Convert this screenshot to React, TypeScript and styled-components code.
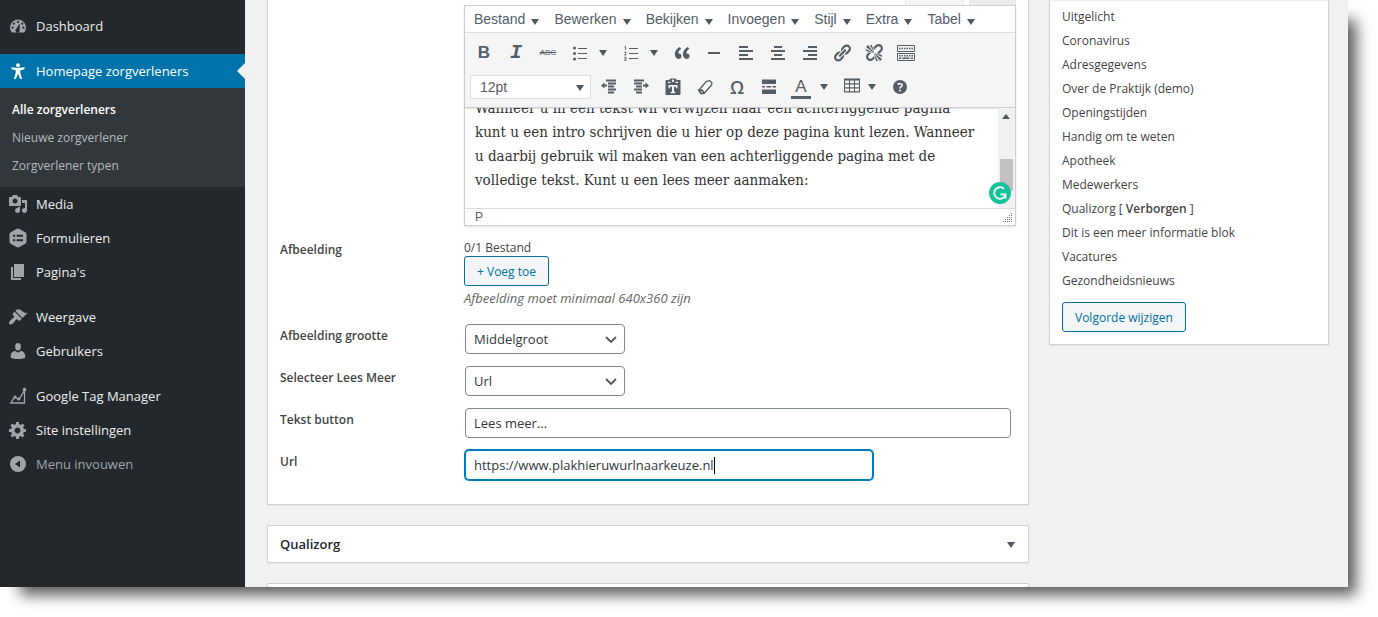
import React from "react";
import styled, { createGlobalStyle, css } from "styled-components";

const sans = `"Open Sans", "Noto Sans", sans-serif`;
const toolFont = `"Liberation Sans", Arial, sans-serif`;

const GlobalStyle = createGlobalStyle`
  *, *::before, *::after { box-sizing: border-box; }
  body {
    margin: 0;
    background: #fff;
    color: #444;
    font: 12px/18px ${sans};
  }
  button, input, select { font-family: inherit; margin: 0; }
  ul, p, h2 { margin: 0; padding: 0; list-style: none; }
  svg { display: block; flex: none; }
`;

const Shell = styled.div`
  display: flex;
  height: calc(100vh - 30px);
  margin: 0 30px 30px 0;
  background: #f1f1f1;
  box-shadow: 14px 14px 14px -6px rgba(0, 0, 0, 0.65);
`;

/* ---------- Sidebar ---------- */

const Sidebar = styled.nav`
  flex: 0 0 245px;
  padding-top: 9px;
  background: #23282d;
  overflow: hidden;
`;

const MenuLink = styled.a<{ $current?: boolean; $muted?: boolean }>`
  position: relative;
  display: flex;
  align-items: center;
  gap: 8px;
  height: 34px;
  padding-left: 8px;
  font-size: 13px;
  color: ${(p) => (p.$muted ? "#a0a5aa" : "#eee")};
  text-decoration: none;
  svg { color: #a0a5aa; }
  ${(p) =>
    p.$current &&
    css`
      background: #0073aa;
      color: #fff;
      svg { color: #fff; }
      &::after {
        content: "";
        position: absolute;
        right: 0;
        top: 9px;
        border: 8px solid transparent;
        border-right-color: #f1f1f1;
        border-left-width: 0;
      }
    `}
`;

const MenuGroup = styled.ul`
  & + & { margin-top: 11px; }
`;

const SubMenu = styled.ul`
  padding: 8px 0 7px;
  background: #32373c;
`;

const SubLink = styled.a<{ $current?: boolean }>`
  display: block;
  padding-left: 12px;
  font-size: 12px;
  line-height: 28px;
  color: ${(p) => (p.$current ? "#fff" : "#b4b9be")};
  font-weight: ${(p) => (p.$current ? 600 : 400)};
  text-decoration: none;
`;

/* ---------- Content ---------- */

const Content = styled.main`
  display: flex;
  flex: 1;
  align-items: flex-start;
  gap: 20px;
  min-width: 0;
  padding: 0 19px 0 22px;
  overflow: hidden;
`;

const Column = styled.div`
  display: flex;
  flex: 1;
  flex-direction: column;
  gap: 20px;
  min-width: 0;
`;

const Box = styled.section<{ $open?: boolean }>`
  background: #fff;
  border: 1px solid #ccd0d4;
  border-top-width: ${(p) => (p.$open ? 0 : 1)}px;
  box-shadow: 0 1px 1px rgba(0, 0, 0, 0.04);
`;

const FormBox = styled(Box)`
  padding: 0 12px 18px;
`;

const BoxHead = styled.div`
  display: flex;
  align-items: center;
  justify-content: space-between;
  height: 36px;
  padding: 0 13px 0 12px;
`;

const BoxTitle = styled.h2`
  font-size: 13px;
  font-weight: 600;
  color: #23282d;
`;

const ToggleButton = styled.button`
  padding: 2px 0 0;
  border: 0;
  background: none;
  color: #72777c;
`;

const Field = styled.div`
  display: grid;
  grid-template-columns: 184px minmax(0, 1fr);
  padding: 6px 0;
`;

const EditorField = styled(Field)`
  padding-top: 0;
`;

const labelText = css`
  font-size: 12px;
  font-weight: 600;
  line-height: 24px;
`;
const Label = styled.label`${labelText}`;
const LabelText = styled.span`${labelText}`;

const FileCount = styled.p`
  padding-top: 1px;
  line-height: 17px;
`;

const Note = styled.p`
  margin: 3px 0 5px;
  font-size: 13px;
  font-style: italic;
  color: #666;
`;

const OutlineButton = styled.button`
  height: 30px;
  padding: 0 12px;
  border: 1px solid #0071a1;
  border-radius: 3px;
  background: #f3f5f6;
  color: #0071a1;
  font-size: 12px;
`;

const SelectWrap = styled.div`
  position: relative;
  width: 160px;
  margin-left: 1px;
  svg {
    position: absolute;
    right: 7px;
    top: 9px;
    color: #555;
    pointer-events: none;
  }
`;

const control = css`
  height: 30px;
  padding: 0 8px;
  border: 1px solid #7e8993;
  border-radius: 4px;
  background: #fff;
  color: #32373c;
  font-size: 13px;
`;

const Select = styled.select`
  ${control}
  width: 100%;
  appearance: none;
`;

const InputWrap = styled.div<{ $short?: boolean }>`
  position: relative;
  margin: 0 5px 0 1px;
  width: ${(p) => (p.$short ? "calc(75% - 6px)" : "auto")};
`;

const Input = styled.input<{ $focused?: boolean }>`
  ${control}
  display: block;
  width: 100%;
  outline: none;
  ${(p) =>
    p.$focused &&
    css`
      border-color: #007cba;
      box-shadow: 0 0 0 1px #007cba;
    `}
`;

const TextCursor = styled.span`
  position: absolute;
  left: 249px;
  top: 7px;
  width: 1px;
  height: 17px;
  background: #000;
`;

/* ---------- Editor ---------- */

const TabStrip = styled.div`
  display: flex;
  justify-content: flex-end;
  gap: 5px;
  height: 5px;
`;

const TabEnd = styled.div<{ $active?: boolean }>`
  width: ${(p) => (p.$active ? 59 : 47)}px;
  border: solid #e5e5e5;
  border-width: 0 1px;
  background: ${(p) => (p.$active ? "#f5f5f5" : "#ebebeb")};
`;

const Editor = styled.div`
  border: 1px solid #ccd0d4;
  box-shadow: 0 1px 2px rgba(0, 0, 0, 0.12);
  font-family: ${toolFont};
  color: #555d66;
`;

const MenuBar = styled.div`
  display: flex;
  gap: 15px;
  height: 27px;
  padding-left: 9px;
  border-bottom: 1px solid #ddd;
`;

const MenuButton = styled.button`
  display: flex;
  align-items: center;
  gap: 6px;
  padding: 0;
  border: 0;
  background: none;
  color: #555d66;
  font-size: 14px;
  svg { margin-top: 5px; }
`;

const Toolbar = styled.div`
  position: relative;
  padding: 3px 5px;
  border-bottom: 1px solid #ccd0d4;
  background: #f5f5f5;
  box-shadow: 0 1px 1px rgba(0, 0, 0, 0.1);
`;

const ToolRow = styled.div`
  display: flex;
  align-items: center;
  gap: 4px;
  height: 34px;
`;

const Tool = styled.button<{ $split?: "wide" | "narrow" }>`
  display: flex;
  align-items: center;
  width: ${(p) => (p.$split === "wide" ? 47 : p.$split === "narrow" ? 44 : 28)}px;
  height: 28px;
  padding: 0 4px;
  border: 0;
  background: none;
  color: #555d66;
  gap: ${(p) => (p.$split === "narrow" ? 6 : 9)}px;
`;

const Glyph = styled.span<{ $kind: "bold" | "italic" | "strike" | "omega" | "color" }>`
  width: 20px;
  text-align: center;
  ${(p) =>
    ({
      bold: "font: 700 17px/20px " + toolFont + ";",
      italic: "font: italic 700 20px/20px 'Liberation Mono', monospace;",
      strike: "font-size: 8px; line-height: 20px; text-decoration: line-through;",
      omega: "font: 700 18px/20px 'Open Sans', sans-serif; font-weight: 600;",
      color: "font-size: 17px; line-height: 18px; border-bottom: 3px solid #555d66; margin-top: 3px;",
    })[p.$kind]}
`;

const SizeWrap = styled.div`
  position: relative;
  width: 121px;
  svg {
    position: absolute;
    right: 7px;
    top: 10px;
    pointer-events: none;
  }
`;

const SizeSelect = styled.select`
  display: block;
  width: 100%;
  height: 24px;
  padding: 0 9px;
  border: 1px solid #ddd;
  border-radius: 0;
  background: #fff;
  color: #555d66;
  font: 14px ${toolFont};
  appearance: none;
`;

const EditArea = styled.div`
  position: relative;
  display: flex;
  height: 100px;
`;

const Prose = styled.div`
  display: flex;
  flex: 1;
  flex-direction: column;
  justify-content: flex-end;
  min-width: 0;
  padding: 0 10px 16px;
  overflow: hidden;
  color: #333;
  font: 15px/24px "DejaVu Serif Condensed", "Liberation Serif", serif;
  white-space: nowrap;
`;

const ScrollTrack = styled.div`
  display: flex;
  flex-direction: column;
  align-items: center;
  justify-content: space-between;
  width: 17px;
  padding: 6px 1px 17px 0;
  background: #f1f1f1;
`;

const ScrollThumb = styled.div`
  width: 13px;
  height: 32px;
  background: #c1c1c1;
`;

const Badge = styled.div`
  position: absolute;
  right: 4px;
  bottom: 4px;
`;

const StatusBar = styled.div`
  display: flex;
  align-items: center;
  justify-content: space-between;
  height: 17px;
  padding: 0 2px 0 10px;
  border-top: 1px solid #ddd;
  font-size: 12px;
  line-height: 16px;
`;

/* ---------- Right column ---------- */

const OrderBox = styled(Box)`
  flex: 0 0 280px;
  padding: 4px 12px 12px;
  border-top-color: #eee;
`;

const OrderList = styled.ul`
  padding-bottom: 9px;
  line-height: 24px;
`;

const Hidden = styled.b`
  font-weight: 600;
`;

/* ---------- Icons ---------- */

type IconProps = { children: React.ReactNode };
const Icon = ({ children }: IconProps) => (
  <svg width="20" height="20" viewBox="0 0 20 20" fill="currentColor" aria-hidden="true">
    {children}
  </svg>
);

const Caret = ({ up }: { up?: boolean }) => (
  <svg width="8" height="6" viewBox="0 0 8 6" fill="#50575e" aria-hidden="true">
    <path d={up ? "M4 0L8 5H0z" : "M0 0h8L4 6z"} />
  </svg>
);

const Chevron = () => (
  <svg width="14" height="14" viewBox="0 0 14 14" fill="none" stroke="currentColor" strokeWidth="1.8" aria-hidden="true">
    <path d="M2 4l5 5 5-5" />
  </svg>
);

const icons = {
  dashboard: (
    <path
      fillRule="evenodd"
      d="M3.76 16.5A8 8 0 1 1 16.24 16.5zM10 4.8a1.1 1.1 0 1 0 0 2.2 1.1 1.1 0 0 0 0-2.2zM5.9 6.6a1.1 1.1 0 1 0 0 2.2 1.1 1.1 0 0 0 0-2.2zM14.3 6.6a1.1 1.1 0 1 0 0 2.2 1.1 1.1 0 0 0 0-2.2zM4.6 10.6a1.1 1.1 0 1 0 0 2.2 1.1 1.1 0 0 0 0-2.2zM15.4 10.6a1.1 1.1 0 1 0 0 2.2 1.1 1.1 0 0 0 0-2.2zM11.9 7.2L8.3 12.7a2.1 2.1 0 1 0 3.3 1z"
    />
  ),
  person: (
    <>
      <circle cx="10" cy="4.2" r="1.9" />
      <path d="M3.5 6.2L8.6 6.7h2.8l5.1-.5v2l-4.200 1v2.600l1.900 6.200h-2.200l-1.700-4.800h-.6L8 18H5.800l1.900-6.200V9.200l-4.200-1z" />
    </>
  ),
  media: (
    <path d="M13 11V4c0-.55-.45-1-1-1h-1.67L9 1H5L3.67 3H2c-.55 0-1 .45-1 1v7c0 .55.45 1 1 1h10c.55 0 1-.45 1-1zM7 4.5c1.38 0 2.5 1.12 2.5 2.5S8.38 9.5 7 9.5 4.5 8.38 4.5 7 5.62 4.5 7 4.5zM14 6h5v10.5c0 1.38-1.12 2.5-2.5 2.5S14 17.88 14 16.5s1.12-2.5 2.5-2.5c.17 0 .34.02.5.05V9h-3V6zm-4 8.05V13h2v3.5c0 1.38-1.12 2.5-2.5 2.5S7 17.88 7 16.5 8.12 14 9.5 14c.17 0 .34.02.5.05z" />
  ),
  forms: (
    <path
      fillRule="evenodd"
      d="M10 .5l1.5.5 6.2 3.6.8 1.4v8l-.8 1.4-6.2 3.6-1.5.5-1.5-.5-6.2-3.6-.8-1.400V6l.8-1.400L8.500 1zM5 6.700v2h2.200v-2zM8.600 6.700v2H15v-2zM5 11.300v2h2.200v-2zM8.600 11.300v2H15v-2z"
    />
  ),
  pages: <path d="M6 15V2h10v13H6zm-1 1h8v2H3V5h2v11z" />,
  brush: (
    <path d="M14.48 11.06L7.41 3.99l1.5-1.5c.5-.56 2.3-.47 3.51.32 1.21.8 1.43 1.28 2.91 2.1 1.18.64 2.45 1.26 4.45.85zm-.71.71L6.7 4.7 4.93 6.47c-.39.39-.39 1.02 0 1.41l1.06 1.06c.39.39.39 1.03 0 1.42-.6.6-1.43 1.11-2.21 1.69-.35.26-.7.53-1.01.84C1.43 14.23.4 16.08 1.4 17.07c.99 1 2.84-.03 4.18-1.36.31-.31.58-.66.85-1.02.57-.78 1.08-1.61 1.69-2.21.39-.39 1.02-.39 1.41 0l1.06 1.06c.39.39 1.02.39 1.41 0z" />
  ),
  user: (
    <>
      <ellipse cx="10" cy="5.800" rx="2.900" ry="3.800" />
      <path d="M7.300 10L10 11.800 12.700 10c2.400 0 4.500 2.300 4.500 4.500V17s-3.600 1.100-7.200 1.100S2.800 17 2.800 17v-2.500c0-2.300 1.900-4.500 4.500-4.500z" />
    </>
  ),
  analytics: (
    <g fill="none" stroke="currentColor" strokeWidth="1.3">
      <path d="M2.800 17L6.800 11l4 2.500L16.500 4.500V17z" />
      <circle cx="16.500" cy="3.500" r="1.200" fill="currentColor" />
      <circle cx="7" cy="11" r=".9" fill="currentColor" />
      <circle cx="10.800" cy="13" r=".9" fill="currentColor" />
    </g>
  ),
  gear: (
    <path d="M18 12h-2.18c-.17.7-.44 1.35-.81 1.93l1.54 1.54-2.1 2.1-1.54-1.54c-.58.36-1.23.63-1.91.79V19H8v-2.18c-.68-.16-1.33-.43-1.91-.79l-1.54 1.54-2.12-2.12 1.54-1.54c-.36-.58-.63-1.23-.79-1.91H1V9.03h2.17c.16-.7.44-1.35.8-1.94L2.43 5.55l2.1-2.1 1.54 1.54c.58-.37 1.24-.64 1.93-.81V2h3v2.18c.68.16 1.33.43 1.91.79l1.54-1.54 2.12 2.12-1.54 1.54c.36.59.64 1.24.8 1.94H18V12zm-8.5 1.5c1.66 0 3-1.34 3-3s-1.34-3-3-3-3 1.34-3 3 1.34 3 3 3z" />
  ),
  collapse: <path fillRule="evenodd" d="M10 2a8 8 0 1 0 0 16 8 8 0 0 0 0-16zM12 6.500v7L7 10z" />,
  bullets: (
    <>
      <circle cx="4.500" cy="5" r="1.500" />
      <circle cx="4.500" cy="10.500" r="1.500" />
      <circle cx="4.500" cy="16" r="1.500" />
      <path d="M8 5h9v1H8zM8 10h9v1H8zM8 15h9v1H8z" />
    </>
  ),
  numbers: (
    <>
      <path d="M8 5h9v1H8zM8 10h9v1H8zM8 15h9v1H8z" />
      <path fill="none" stroke="currentColor" strokeWidth=".9" d="M3.500 4l1-.6v3.400M3.300 9h1.600v1.300L3.500 12h1.800M3.300 14.200h1.600v3.300H3.300M3.600 15.800h1.300" />
    </>
  ),
  quote: (
    <path d="M9.49 13.22c0-.74-.2-1.38-.61-1.9-.62-.78-1.83-.88-2.53-.72-.29-1.65 1.11-3.75 2.92-4.65L7.88 4c-2.73 1.3-5.42 4.28-4.96 8.05C3.21 14.43 4.59 16 6.54 16c.85 0 1.56-.25 2.12-.75s.83-1.18.83-2.03zm8.05 0c0-.74-.2-1.38-.61-1.9-.63-.78-1.83-.88-2.53-.72-.29-1.65 1.11-3.75 2.92-4.65L15.93 4c-2.73 1.3-5.41 4.28-4.95 8.05.29 2.38 1.66 3.95 3.61 3.95.85 0 1.56-.25 2.12-.75s.83-1.18.83-2.03z" />
  ),
  rule: <path d="M4 9h12v2H4z" />,
  left: <path d="M3 3h9v2H3zM3 7h14v2H3zM3 11h9v2H3zM3 15h14v2H3z" />,
  center: <path d="M6 3h8v2H6zM3 7h14v2H3zM6 11h8v2H6zM3 15h14v2H3z" />,
  right: <path d="M8 3h9v2H8zM3 7h14v2H3zM8 11h9v2H8zM3 15h14v2H3z" />,
  link: (
    <path d="M17.74 2.76c1.68 1.69 1.68 4.41 0 6.1l-1.53 1.52c-1.12 1.12-2.7 1.47-4.14 1.09l2.62-2.61.76-.77.76-.76c.84-.84.84-2.2 0-3.04-.84-.85-2.2-.85-3.04 0l-.77.76-3.38 3.38c-.37-1.44-.02-3.02 1.1-4.14l1.52-1.53c1.69-1.68 4.42-1.68 6.1 0zM8.59 13.43l5.34-5.34c.42-.42.42-1.1 0-1.52-.44-.43-1.13-.39-1.53 0l-5.33 5.34c-.42.42-.42 1.1 0 1.52.44.43 1.13.39 1.52 0zm-.76 2.29l4.14-4.15c.38 1.44.03 3.02-1.09 4.14l-1.52 1.53c-1.69 1.68-4.41 1.68-6.1 0-1.68-1.68-1.68-4.42 0-6.1l1.53-1.52c1.12-1.12 2.7-1.47 4.14-1.1l-4.14 4.15c-.85.84-.85 2.2 0 3.05.84.84 2.2.84 3.04 0z" />
  ),
  unlink: (
    <path d="M17.74 2.26c1.68 1.69 1.68 4.41 0 6.1l-1.53 1.52c-.32.33-.69.58-1.08.77L13 10l1.69-1.64.76-.77.76-.76c.84-.84.84-2.2 0-3.04-.84-.85-2.2-.85-3.04 0l-.77.76-.76.76L10 7l-.65-2.14c.19-.38.44-.75.77-1.07l1.52-1.53c1.69-1.68 4.42-1.68 6.1 0zM2 4l8 6-6-8zm4-2l4 8-2-8H6zM2 6l8 4-8-2V6zm7.36 7.69L10 13l.74 2.35-1.38 1.39c-1.69 1.68-4.41 1.68-6.1 0-1.68-1.68-1.68-4.42 0-6.1l1.39-1.38L7 10l-.69.64-1.52 1.53c-.85.84-.85 2.2 0 3.04.84.85 2.2.85 3.04 0zM18 16l-8-6 6 8zm-4 2l-4-8 2 8h2zm4-4l-8-4 8 2v2z" />
  ),
  keyboard: (
    <g fill="none" stroke="currentColor">
      <path d="M1.500 2.500h17v6h-17zM1.500 10.500h17v7h-17z" />
      <path strokeWidth="1.500" strokeDasharray="1.500 1" d="M3 5.500h14M3 12.800h14" />
      <path strokeWidth="1.500" d="M3 15.300h2.200M6.500 15.300h7M14.800 15.300H17" />
    </g>
  ),
  outdent: <path d="M7 2.500h10v2H7zM9 5.500h8v2H9zM9 8.500h6v2H9zM9 11.500h8v2H9zM9 14.500h6v2H9zM8 9.500H5.500v2L2 8.500l3.500-3v2H8z" />,
  indent: <path d="M3 2.500h10v2H3zM3 5.500h8v2H3zM5 8.500h6v2H5zM3 11.500h8v2H3zM5 14.500h6v2H5zM12 7.500h2.500v-2l3.500 3-3.500 3v-2H12z" />,
  paste: (
    <path
      fillRule="evenodd"
      d="M7.500 1.500h5L14 3h2.500c.6 0 1 .4 1 1v13c0 .6-.4 1-1 1h-13c-.6 0-1-.4-1-1V4c0-.6.4-1 1-1H6zM10 2.600a1.200 1.200 0 1 0 0 2.400 1.200 1.200 0 0 0 0-2.400zM5 4.800V6h10V4.800h-2.500V6h-5V4.800zM5.500 8v3.300h1.500V9.800h2v5H7.700v1.400h4.600v-1.400H11v-5h2v1.500h1.500V8z"
    />
  ),
  eraser: (
    <g fill="none" stroke="currentColor" strokeWidth="1.300" strokeLinejoin="round">
      <path d="M3.800 13.200L11.500 4.300l3.200-.6 2.200 2-.3 2.300L9.200 16.300l-3 .2z" />
      <path strokeWidth="1.600" d="M3.800 13.200l3.200-.2 2.200 3.300-3 .2z" />
    </g>
  ),
  more: <path d="M3 2.500h14V7H3zM3 9h3v1.500H3zM7.500 9H12v1.500H7.500zM13.500 9H17v1.500h-3.500zM3 12.500h14V17H3z" />,
  table: <path fillRule="evenodd" d="M2 1.500h16v14H2zM3 3.500v2.700h4V3.500zM8 3.500v2.700h4V3.500zM13 3.500v2.700h4V3.500zM3 7.500v2.700h4V7.500zM8 7.500v2.700h4V7.500zM13 7.500v2.700h4V7.500zM3 11.500v2.700h4v-2.700zM8 11.500v2.700h4v-2.700zM13 11.500v2.700h4v-2.700z" />,
  help: (
    <>
      <circle cx="10" cy="10" r="7" />
      <path fill="none" stroke="#f5f5f5" strokeWidth="1.700" d="M7.700 7.500C9 6.400 12.200 6.300 12.200 8.200c0 1.500-2.200 1.400-2.200 3.300" />
      <circle cx="10" cy="13.400" r="1" fill="#f5f5f5" />
    </>
  ),
};

const Grammarly = () => (
  <svg width="22" height="22" viewBox="0 0 22 22" role="img" aria-label="Grammarly">
    <circle cx="11" cy="11" r="11" fill="#15c39a" />
    <path d="M15 6.800A5.800 5.800 0 1 0 16.600 12.500M11.500 12.400h5v4" fill="none" stroke="#fff" strokeWidth="1.800" />
  </svg>
);

const ResizeGrip = () => (
  <svg width="10" height="10" viewBox="0 0 10 10" stroke="#72777c" strokeDasharray="1 1" aria-hidden="true">
    <path d="M8 1.500h2M6 3.500h4M4 5.500h6M2 7.500h8M0 9.500h10" />
  </svg>
);

/* ---------- Data ---------- */

type IconName = keyof typeof icons;
type Entry = { icon: IconName; text: string; current?: boolean; muted?: boolean };

const groups: Entry[][] = [
  [{ icon: "dashboard", text: "Dashboard" }],
  [
    { icon: "person", text: "Homepage zorgverleners", current: true },
    { icon: "media", text: "Media" },
    { icon: "forms", text: "Formulieren" },
    { icon: "pages", text: "Pagina's" },
  ],
  [
    { icon: "brush", text: "Weergave" },
    { icon: "user", text: "Gebruikers" },
  ],
  [
    { icon: "analytics", text: "Google Tag Manager" },
    { icon: "gear", text: "Site instellingen" },
    { icon: "collapse", text: "Menu invouwen", muted: true },
  ],
];

const subItems = ["Alle zorgverleners", "Nieuwe zorgverlener", "Zorgverlener typen"];
const editorMenus = ["Bestand", "Bewerken", "Bekijken", "Invoegen", "Stijl", "Extra", "Tabel"];

const orderItems: React.ReactNode[] = [
  "Uitgelicht",
  "Coronavirus",
  "Adresgegevens",
  "Over de Praktijk (demo)",
  "Openingstijden",
  "Handig om te weten",
  "Apotheek",
  "Medewerkers",
  <>Qualizorg [ <Hidden>Verborgen</Hidden> ]</>,
  "Dit is een meer informatie blok",
  "Vacatures",
  "Gezondheidsnieuws",
];

const IconTool = ({ name, label, split }: { name: IconName; label: string; split?: "wide" | "narrow" }) => (
  <Tool type="button" aria-label={label} $split={split}>
    <Icon>{icons[name]}</Icon>
    {split && <Caret />}
  </Tool>
);

const SelectField = ({ id, label, value }: { id: string; label: string; value: string }) => (
  <Field>
    <Label htmlFor={id}>{label}</Label>
    <SelectWrap>
      <Select id={id} defaultValue={value}>
        <option>{value}</option>
      </Select>
      <Chevron />
    </SelectWrap>
  </Field>
);

export default function App() {
  return (
    <>
      <GlobalStyle />
      <Shell>
        <Sidebar>
          {groups.map((group, i) => (
            <MenuGroup key={i}>
              {group.map((e) => (
                <li key={e.text}>
                  <MenuLink href="#" $current={e.current} $muted={e.muted}>
                    <Icon>{icons[e.icon]}</Icon>
                    {e.text}
                  </MenuLink>
                  {e.current && (
                    <SubMenu>
                      {subItems.map((s, n) => (
                        <li key={s}>
                          <SubLink href="#" $current={n === 0}>{s}</SubLink>
                        </li>
                      ))}
                    </SubMenu>
                  )}
                </li>
              ))}
            </MenuGroup>
          ))}
        </Sidebar>

        <Content>
          <Column>
            <FormBox $open>
              <EditorField>
                <span />
                <div>
                  <TabStrip>
                    <TabEnd $active />
                    <TabEnd />
                  </TabStrip>
                  <Editor>
                    <MenuBar>
                      {editorMenus.map((m) => (
                        <MenuButton type="button" key={m}>
                          {m}
                          <Caret />
                        </MenuButton>
                      ))}
                    </MenuBar>
                    <Toolbar>
                      <ToolRow>
                        <Tool type="button"><Glyph $kind="bold">B</Glyph></Tool>
                        <Tool type="button"><Glyph $kind="italic">I</Glyph></Tool>
                        <Tool type="button"><Glyph $kind="strike">ABC</Glyph></Tool>
                        <IconTool name="bullets" label="Lijst" split="wide" />
                        <IconTool name="numbers" label="Genummerde lijst" split="wide" />
                        <IconTool name="quote" label="Citaat" />
                        <IconTool name="rule" label="Horizontale lijn" />
                        <IconTool name="left" label="Links uitlijnen" />
                        <IconTool name="center" label="Centreren" />
                        <IconTool name="right" label="Rechts uitlijnen" />
                        <IconTool name="link" label="Link invoegen" />
                        <IconTool name="unlink" label="Link verwijderen" />
                        <IconTool name="keyboard" label="Werkbalk tonen" />
                      </ToolRow>
                      <ToolRow>
                        <SizeWrap>
                          <SizeSelect aria-label="Lettergrootte" defaultValue="12pt">
                            <option>12pt</option>
                          </SizeSelect>
                          <Caret />
                        </SizeWrap>
                        <IconTool name="outdent" label="Inspringing verkleinen" />
                        <IconTool name="indent" label="Inspringing vergroten" />
                        <IconTool name="paste" label="Plakken als tekst" />
                        <IconTool name="eraser" label="Opmaak wissen" />
                        <Tool type="button"><Glyph $kind="omega">Ω</Glyph></Tool>
                        <IconTool name="more" label="Lees meer invoegen" />
                        <Tool type="button" $split="wide">
                          <Glyph $kind="color">A</Glyph>
                          <Caret />
                        </Tool>
                        <IconTool name="table" label="Tabel" split="narrow" />
                        <IconTool name="help" label="Hulp" />
                      </ToolRow>
                    </Toolbar>
                    <EditArea>
                      <Prose>
                        <p>
                          Wanneer u in een tekst wil verwijzen naar een achterliggende pagina<br />
                          kunt u een intro schrijven die u hier op deze pagina kunt lezen. Wanneer<br />
                          u daarbij gebruik wil maken van een achterliggende pagina met de<br />
                          volledige tekst. Kunt u een lees meer aanmaken:
                        </p>
                      </Prose>
                      <ScrollTrack>
                        <Caret up />
                        <ScrollThumb />
                      </ScrollTrack>
                      <Badge><Grammarly /></Badge>
                    </EditArea>
                    <StatusBar>
                      P
                      <ResizeGrip />
                    </StatusBar>
                  </Editor>
                </div>
              </EditorField>

              <Field>
                <LabelText>Afbeelding</LabelText>
                <div>
                  <FileCount>0/1 Bestand</FileCount>
                  <OutlineButton type="button">+ Voeg toe</OutlineButton>
                  <Note>Afbeelding moet minimaal 640x360 zijn</Note>
                </div>
              </Field>
              <SelectField id="size" label="Afbeelding grootte" value="Middelgroot" />
              <SelectField id="more" label="Selecteer Lees Meer" value="Url" />
              <Field>
                <Label htmlFor="button-text">Tekst button</Label>
                <InputWrap>
                  <Input id="button-text" type="text" defaultValue="Lees meer..." />
                </InputWrap>
              </Field>
              <Field>
                <Label htmlFor="url">Url</Label>
                <InputWrap $short>
                  <Input id="url" type="url" defaultValue="https://www.plakhieruwurlnaarkeuze.nl" $focused />
                  <TextCursor aria-hidden="true" />
                </InputWrap>
              </Field>
            </FormBox>

            <Box>
              <BoxHead>
                <BoxTitle>Qualizorg</BoxTitle>
                <ToggleButton type="button" aria-label="Qualizorg openen"><Caret /></ToggleButton>
              </BoxHead>
            </Box>
            <Box>
              <BoxHead />
            </Box>
          </Column>

          <OrderBox>
            <OrderList>
              {orderItems.map((item, i) => (
                <li key={i}>{item}</li>
              ))}
            </OrderList>
            <OutlineButton type="button">Volgorde wijzigen</OutlineButton>
          </OrderBox>
        </Content>
      </Shell>
    </>
  );
}
